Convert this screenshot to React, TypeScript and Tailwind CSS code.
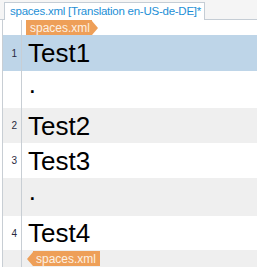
import React from 'react';

interface Row {
  num?: number;
  text: string;
  height: string;
  bg: string;
}

const rows: Row[] = [
  { num: 1, text: 'Test1', height: 'h-[36px]', bg: 'bg-[#bed5e8]' },
  { text: '·', height: 'h-[37px]', bg: 'bg-white' },
  { num: 2, text: 'Test2', height: 'h-[35px]', bg: 'bg-[#efefef]' },
  { num: 3, text: 'Test3', height: 'h-[35px]', bg: 'bg-white' },
  { text: '·', height: 'h-[38px]', bg: 'bg-[#efefef]' },
  { num: 4, text: 'Test4', height: 'h-[34px]', bg: 'bg-white' },
];

const TagRight = () => (
  <div className="flex items-center">
    <div className="h-[15px] bg-[#ee9f58] pl-[4px] pr-[2px] flex items-center text-[12px] leading-none text-[#fdf0e2]">
      spaces.xml
    </div>
    <div className="w-0 h-0 border-y-[7.5px] border-y-transparent border-l-[6px] border-l-[#ee9f58]" />
  </div>
);

const TagLeft = () => (
  <div className="flex items-center">
    <div className="w-0 h-0 border-y-[7.5px] border-y-transparent border-r-[6px] border-r-[#ee9f58]" />
    <div className="h-[15px] bg-[#ee9f58] pl-[3px] pr-[4px] flex items-center text-[12px] leading-none text-[#fdf0e2]">
      spaces.xml
    </div>
  </div>
);

export default function App() {
  return (
    <div className="w-[257px] h-[267px] overflow-hidden bg-white font-['Liberation_Sans',Arial,sans-serif]">
      {/* Tab strip */}
      <div className="h-[20px] bg-[#f5f5f5] border-b border-[#c5cdd5] flex items-end pl-[4px]">
        <div className="h-[18px] -mb-px bg-white border border-b-0 border-[#c5cdd5] pl-[5px] pr-[3px] flex items-center text-[11.5px] tracking-[-0.25px] text-[#1d8fd6] whitespace-nowrap">
          spaces.xml [Translation en-US-de-DE]*
        </div>
      </div>

      {/* Editor */}
      <div className="flex flex-col">
        <div className="flex h-[15px]">
          <div className="w-[2px]" />
          <div className="w-[20px] border-l border-r border-[#c8ced4]" />
          <div className="pl-[4px] flex items-center">
            <TagRight />
          </div>
        </div>
        {rows.map((row, i) => (
          <div key={i} className={`flex ${row.height} ${row.bg}`}>
            <div className="w-[2px] bg-white" />
            <div className="w-[20px] border-l border-r border-[#c8ced4] flex items-center justify-end pr-[4px] text-[10px] text-[#2a2a40]">
              {row.num ?? ''}
            </div>
            <div className="pl-[6px] flex items-center text-[26px] leading-none text-black">
              {row.text}
            </div>
          </div>
        ))}
        <div className="flex h-[17px] bg-[#efefef]">
          <div className="w-[2px] bg-white" />
          <div className="w-[20px] border-l border-r border-[#c8ced4]" />
          <div className="pl-[5px] flex items-center">
            <TagLeft />
          </div>
        </div>
      </div>
    </div>
  );
}
